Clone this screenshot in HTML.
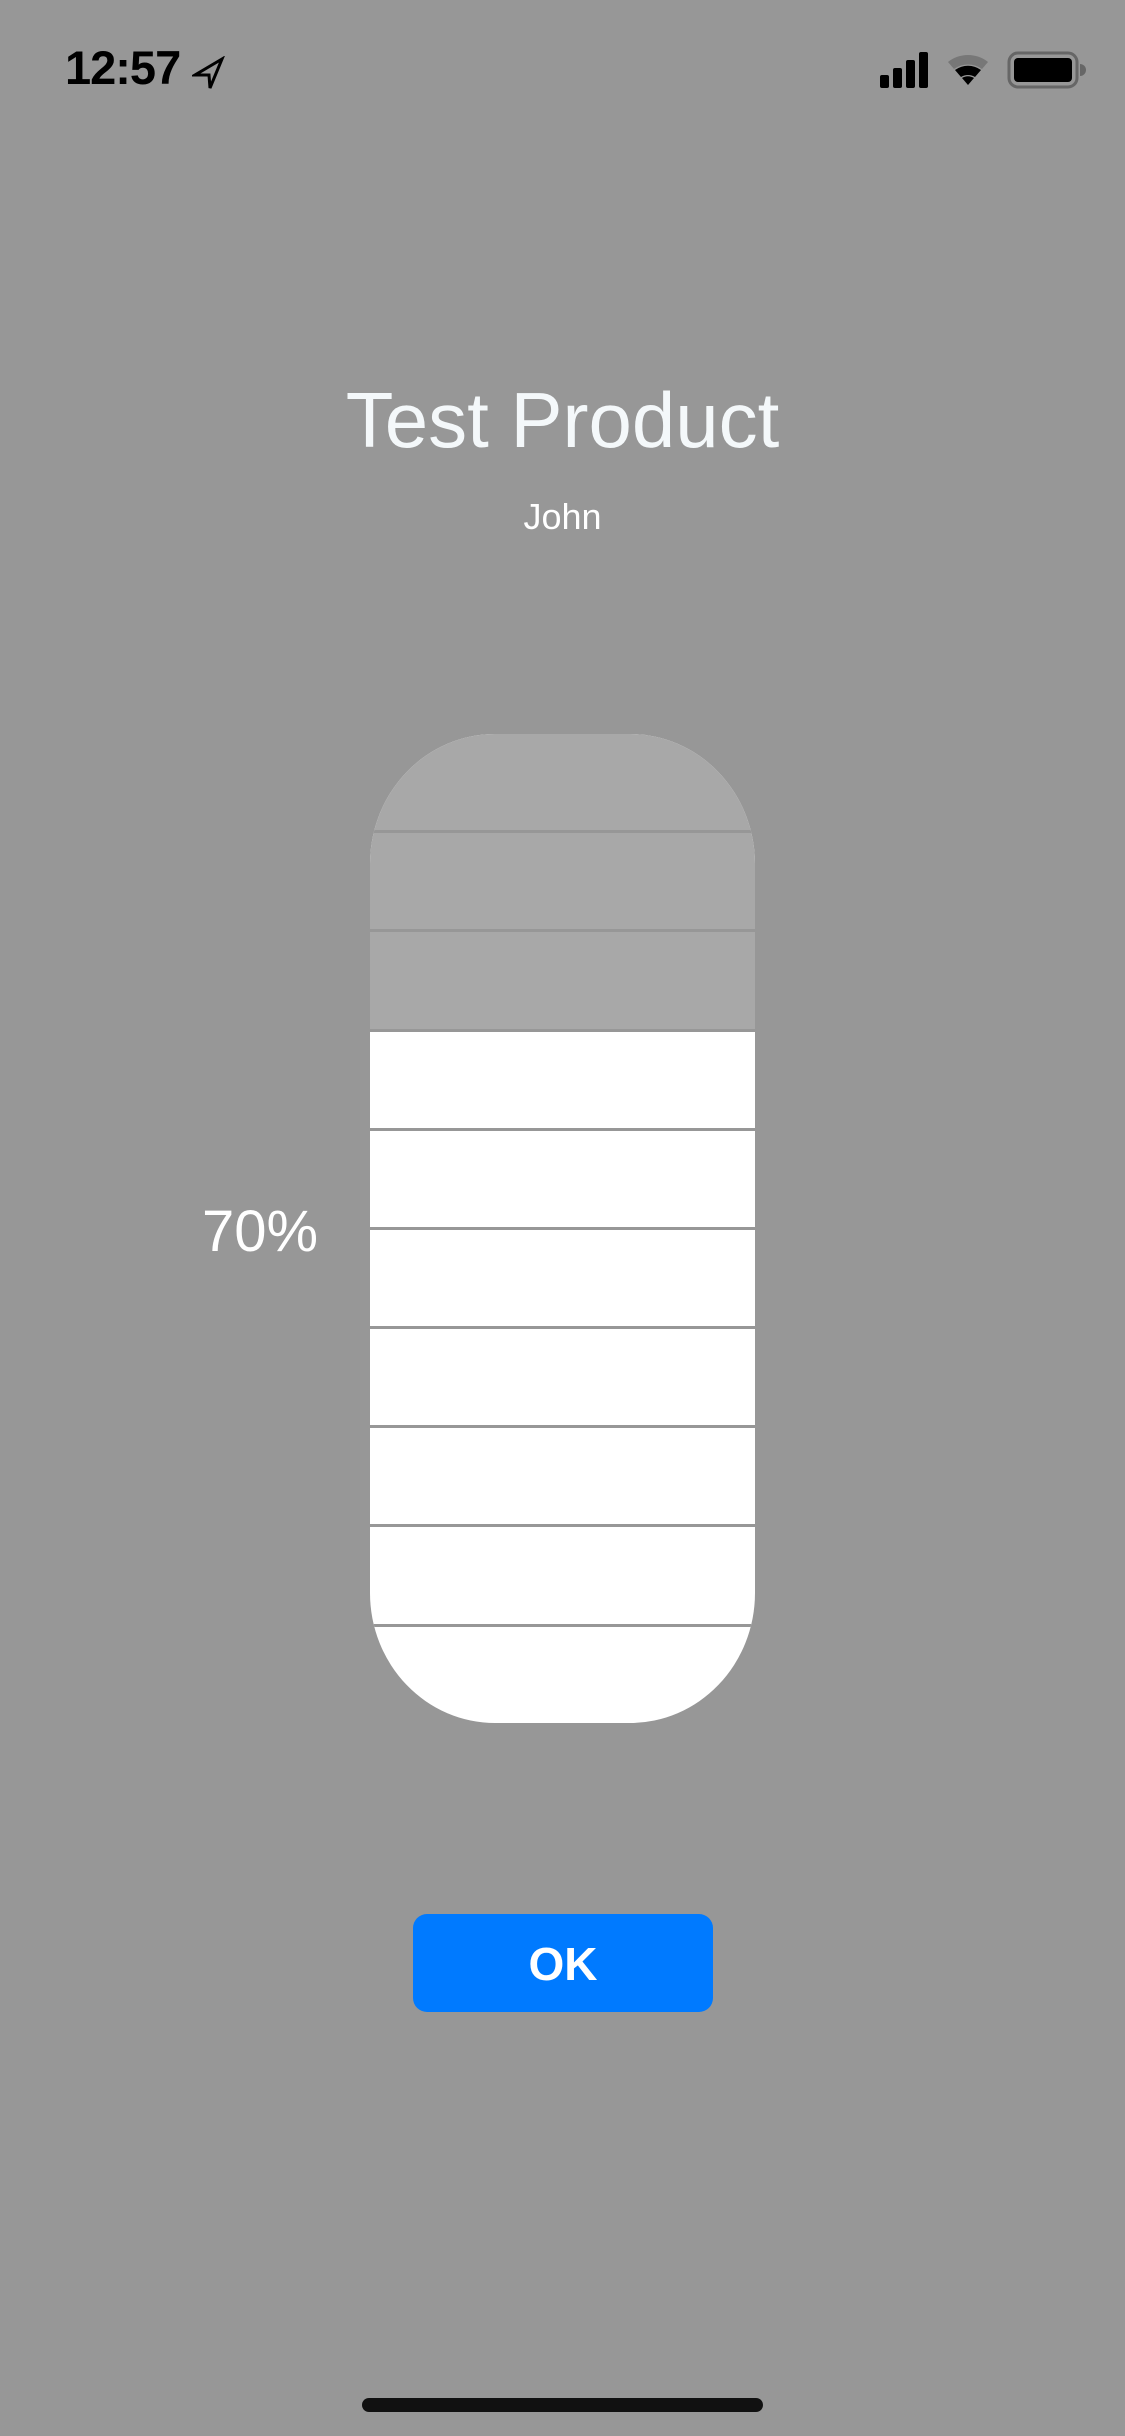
<!DOCTYPE html>
<html><head><meta charset="utf-8"><style>
html,body{margin:0;padding:0}
body{width:1125px;height:2436px;background:#979797;position:relative;overflow:hidden;font-family:"Liberation Sans",sans-serif}
.abs{position:absolute}
</style></head><body>
<div class="abs" style="left:65px;top:40px;font-size:47px;font-weight:bold;color:#000;letter-spacing:-1px">12:57</div>
<svg class="abs" style="left:192px;top:56px" width="34" height="34" viewBox="0 0 34 34"><path d="M30 3 L3 19 L17 19 L18 32 Z" fill="none" stroke="#000" stroke-width="3" stroke-linejoin="miter"/></svg>
<svg class="abs" style="left:878px;top:48px" width="210" height="44" viewBox="0 0 210 44">
<rect x="2" y="27" width="9" height="13" rx="2" fill="#000"/>
<rect x="15" y="20" width="9" height="20" rx="2" fill="#000"/>
<rect x="28" y="12" width="9" height="28" rx="2" fill="#000"/>
<rect x="41" y="4" width="9" height="36" rx="2" fill="#000"/>
<path d="M70 14 A32 32 0 0 1 110 14 L104 21 A24 24 0 0 0 76 21 Z" fill="#777"/>
<path d="M77 22 A22 22 0 0 1 103 22 L97 29 A13 13 0 0 0 83 29 Z" fill="#000"/>
<path d="M84 30 A11 11 0 0 1 96 30 L90 37 Z" fill="#000"/>
<rect x="131" y="5" width="68" height="34" rx="9" fill="none" stroke="#666" stroke-width="3"/>
<rect x="136" y="10" width="58" height="24" rx="4" fill="#000"/>
<path d="M202 16 A6 6 0 0 1 202 28 Z" fill="#666"/>
</svg>
<div class="abs" style="left:0;width:1125px;top:375px;text-align:center;font-size:78px;color:#f4f8fa">Test Product</div>
<div class="abs" style="left:0;width:1125px;top:496px;text-align:center;font-size:36px;color:#fff">John</div>
<div class="abs" style="left:202px;top:1198px;font-size:58px;color:#fff">70%</div>
<div class="abs" style="left:370px;top:734px;width:385px;height:989px;border-radius:125px/130px;overflow:hidden;background:#fff">
<div style="position:absolute;left:0;top:0;width:385px;height:297px;background:#a8a8a8"></div>
<div style="position:absolute;left:0;top:96px;width:385px;height:3px;background:#979797"></div>
<div style="position:absolute;left:0;top:195px;width:385px;height:3px;background:#979797"></div>
<div style="position:absolute;left:0;top:295px;width:385px;height:3px;background:#979797"></div>
<div style="position:absolute;left:0;top:394px;width:385px;height:3px;background:#979797"></div>
<div style="position:absolute;left:0;top:493px;width:385px;height:3px;background:#979797"></div>
<div style="position:absolute;left:0;top:592px;width:385px;height:3px;background:#979797"></div>
<div style="position:absolute;left:0;top:691px;width:385px;height:3px;background:#979797"></div>
<div style="position:absolute;left:0;top:790px;width:385px;height:3px;background:#979797"></div>
<div style="position:absolute;left:0;top:890px;width:385px;height:3px;background:#979797"></div>
</div>
<div class="abs" style="left:413px;top:1914px;width:300px;height:98px;background:#007aff;border-radius:14px;color:#fff;font-weight:bold;font-size:46px;text-align:center;line-height:100px">OK</div>
<div class="abs" style="left:362px;top:2398px;width:401px;height:14px;background:#111;border-radius:7px"></div>
</body></html>
